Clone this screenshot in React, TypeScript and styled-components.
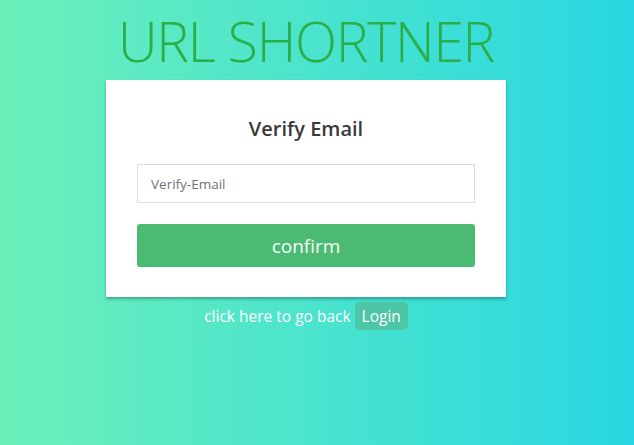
import React from "react";
import styled, { createGlobalStyle } from "styled-components";

const Global = createGlobalStyle`
  html, body { margin: 0; padding: 0; height: 100%; }
  body {
    font-family: "Open Sans", "Noto Sans", sans-serif;
    background: linear-gradient(to right, #6cf0b9 0%, #28d7e2 100%);
    min-height: 445px;
  }
`;

const Page = styled.div`
  width: 400px;
  margin-left: 106px;
  display: flex;
  flex-direction: column;
  align-items: center;
`;

const Title = styled.h1`
  margin: 0;
  height: 80px;
  font-family: "Open Sans", sans-serif;
  font-weight: 300;
  font-size: 55px;
  line-height: 82px;
  color: #2aae48;
  white-space: nowrap;
  letter-spacing: -1.2px;
`;

const Card = styled.div`
  width: 400px;
  box-sizing: border-box;
  background: #fff;
  padding: 34px 31px 30px;
  box-shadow: 0 2px 3px rgba(0, 0, 0, 0.3);
  display: flex;
  flex-direction: column;
`;

const Heading = styled.h2`
  margin: 0 0 20px;
  text-align: center;
  font-size: 20px;
  font-weight: 600;
  line-height: 30px;
  color: #3a3a3a;
`;

const Input = styled.input`
  height: 39px;
  box-sizing: border-box;
  border: 1px solid #dcdcdc;
  padding: 0 13px;
  font-family: inherit;
  font-size: 13.5px;
  color: #495057;
  outline: none;
  &::placeholder { color: #6c757d; }
`;

const Button = styled.button`
  margin-top: 21px;
  height: 43px;
  border: none;
  border-radius: 3px;
  background: #4bba72;
  color: #f7fff7;
  font-family: inherit;
  font-size: 19px;
  cursor: pointer;
`;

const Footer = styled.div`
  margin-top: 5px;
  display: flex;
  align-items: center;
  gap: 4px;
  color: #fff;
  font-size: 15.5px;
`;

const Badge = styled.a`
  padding: 3px 7px 3px;
  border-radius: 5px;
  background: #4cc6a5;
  color: #fff;
  font-size: 15.5px;
  text-decoration: none;
`;

export default function App() {
  return (
    <>
      <Global />
      <Page>
        <Title>URL SHORTNER</Title>
        <Card>
          <Heading>Verify Email</Heading>
          <Input placeholder="Verify-Email" />
          <Button>confirm</Button>
        </Card>
        <Footer>
          <span>click here to go back</span>
          <Badge href="#">Login</Badge>
        </Footer>
      </Page>
    </>
  );
}
